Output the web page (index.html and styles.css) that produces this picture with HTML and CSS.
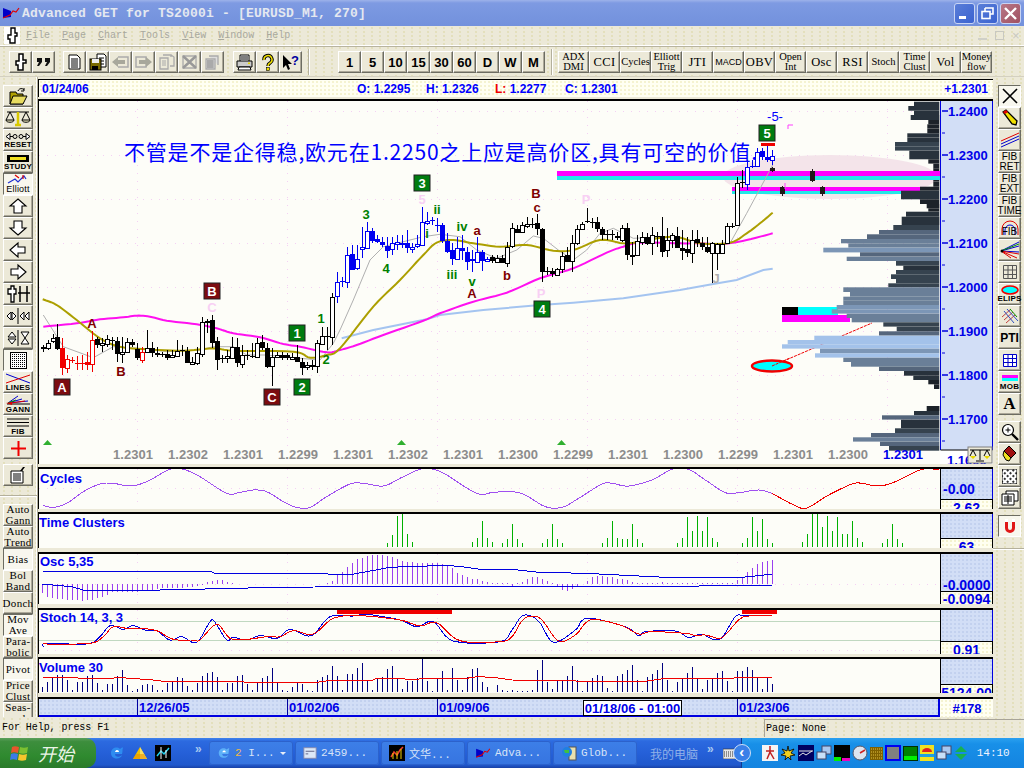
FILE: index.html
```html
<!DOCTYPE html>
<html lang="en">
<head>
<meta charset="utf-8">
<title>Advanced GET for TS2000i</title>
<link rel="stylesheet" href="styles.css">
</head>
<body>
<header class="titlebar">
  <svg class="app-icon" width="18" height="14" viewBox="0 0 18 14"><path d="M1 2l8 3v6l-8 1z" fill="#0000c8"/><path d="M1 12l7-3 3-4 3 1 3-4" fill="none" stroke="#e00000" stroke-width="1.2"/></svg>
  <span class="title-text">Advanced GET for TS2000i - [EURUSD_M1, 270]</span>
  <div class="win-btns">
    <span class="win-btn"><svg width="21" height="21" viewBox="0 0 21 21"><rect x="5" y="13" width="7" height="3" fill="#fff"/></svg></span>
    <span class="win-btn"><svg width="21" height="21" viewBox="0 0 21 21"><path d="M8 5h8v6h-3M8 5v3" fill="none" stroke="#fff" stroke-width="1.6"/><rect x="5" y="8.500" width="8" height="7" fill="none" stroke="#fff" stroke-width="1.6"/></svg></span>
    <span class="win-btn win-close"><svg width="21" height="21" viewBox="0 0 21 21"><path d="M5 5l11 11M16 5L5 16" stroke="#fff" stroke-width="2.400"/></svg></span>
  </div>
</header>

<nav class="menubar dots">
  <svg class="menu-logo" width="16" height="17" viewBox="0 0 16 17"><rect width="16" height="17" fill="#fff"/><path d="M7 1h4v5h2v3h-2v7H6v-4H4V8h3z" fill="#fff" stroke="#000" stroke-width="1.400"/></svg>
  <span class="menu-item"><u>F</u>ile</span>
  <span class="menu-item"><u>P</u>age</span>
  <span class="menu-item"><u>C</u>hart</span>
  <span class="menu-item"><u>T</u>ools</span>
  <span class="menu-item"><u>V</u>iew</span>
  <span class="menu-item"><u>W</u>indow</span>
  <span class="menu-item"><u>H</u>elp</span>
  <div class="mdi-btns"><i class="mdi-min"></i><i class="mdi-max"></i><i class="mdi-x">×</i></div>
</nav>

<div class="toolbar dots">
  <div class="tgroup g-a">
    <span class="btn"><svg width="19" height="18" viewBox="0 0 19 18"><path d="M8 1h4v6h3v3h-3v7H7v-5H5V8h3z" fill="#fff" stroke="#000" stroke-width="1.500"/></svg></span>
    <span class="btn"><svg width="19" height="18" viewBox="0 0 19 18"><path d="M3 5h5v4l-3 4H3l2-4H3zM11 5h5v4l-3 4h-2l2-4h-2z" fill="#111"/></svg></span>
  </div>
  <div class="tgroup g-b">
    <span class="btn"><svg width="19" height="18" viewBox="0 0 19 18"><path d="M4 2h8l3 3v11H4zM6 6h7M6 8h7M6 10h7M6 12h7M6 14h7" fill="#fff" stroke="#000"/></svg></span>
    <span class="btn"><svg width="19" height="18" viewBox="0 0 19 18"><path d="M9 1h7l2 2v11H9z" fill="#fff" stroke="#000"/><path d="M11 5h5M11 8h5M11 11h5" stroke="#000"/><rect x="2" y="6" width="11" height="11" fill="#7a6b00" stroke="#000"/><rect x="4" y="6" width="7" height="4" fill="#eee"/><rect x="4" y="13" width="6" height="4" fill="#000"/></svg></span>
    <span class="btn"><svg width="19" height="18" viewBox="0 0 19 18"><path d="M7 4h10v10H7" fill="none" stroke="#aaa" stroke-width="1.500"/><path d="M1 9l6-5v3h7v4H7v3z" fill="#a8a89c"/></svg></span>
    <span class="btn"><svg width="19" height="18" viewBox="0 0 19 18"><path d="M2 4h10v10H2z" fill="none" stroke="#aaa" stroke-width="1.500"/><path d="M18 9l-6-5v3H5v4h7v3z" fill="#a8a89c"/></svg></span>
    <span class="btn"><svg width="19" height="18" viewBox="0 0 19 18"><path d="M3 5h8v11H3zM6 2h8v2M9 5v0M14 2l3 2v9h-4" fill="none" stroke="#aaa" stroke-width="1.300"/><path d="M5 8h4M5 10h4M5 12h4" stroke="#aaa"/></svg></span>
    <span class="btn"><svg width="19" height="18" viewBox="0 0 19 18"><path d="M3 3h13v12H3z" fill="none" stroke="#aaa" stroke-width="1.300"/><path d="M3 3l13 12M16 3L3 15" stroke="#999" stroke-width="2.400"/></svg></span>
    <span class="btn"><svg width="19" height="18" viewBox="0 0 19 18"><path d="M3 6h9v10H3zM6 3h9v9" fill="#ddd" stroke="#aaa" stroke-width="1.300"/><path d="M4 8h7M4 10h7M4 12h7M4 14h7M5 7v8M7 7v8M9 7v8" stroke="#999"/></svg></span>
  </div>
  <div class="tgroup g-c">
    <span class="btn"><svg width="19" height="18" viewBox="0 0 19 18"><path d="M5 8V2h9v6" fill="#fff" stroke="#000"/><path d="M2 8h15v6H2z" fill="#ccc" stroke="#000"/><path d="M4 14l-1 3h13l-1-3z" fill="#fff" stroke="#000"/><path d="M6 4h7M6 6h7" stroke="#000"/><rect x="13" y="9.500" width="2" height="1.500" fill="#e8d800"/></svg></span>
    <span class="btn"><svg width="19" height="18" viewBox="0 0 19 18"><path d="M6 7a4 4 0 1 1 6 3c-2 1-2 2-2 3" fill="none" stroke="#000" stroke-width="3.400"/><path d="M6 7a4 4 0 1 1 6 3c-2 1-2 2-2 3" fill="none" stroke="#f0e000" stroke-width="1.500"/><rect x="8.500" y="14.500" width="3" height="3" fill="#f0e000" stroke="#000" stroke-width=".6"/></svg></span>
    <span class="btn"><svg width="19" height="18" viewBox="0 0 19 18"><path d="M2 2v13l3-3 2 5 2-1-2-5h4z" fill="#000"/><text x="10" y="12" class="qmark">?</text></svg></span>
  </div>
  <span class="tsep"></span>
  <div class="tgroup g-d">
    <span class="btn num">1</span><span class="btn num">5</span><span class="btn num">10</span><span class="btn num">15</span><span class="btn num">30</span><span class="btn num">60</span><span class="btn num">D</span><span class="btn num">W</span><span class="btn num">M</span>
  </div>
  <span class="tsep t2"></span>
  <div class="tgroup g-e">
    <span class="btn stud">ADX<br>DMI</span><span class="btn stud big">CCI</span><span class="btn stud">Cycles</span><span class="btn stud">Elliott<br>Trig</span><span class="btn stud big">JTI</span><span class="btn stud small">MACD</span><span class="btn stud big">OBV</span><span class="btn stud">Open<br>Int</span><span class="btn stud big">Osc</span><span class="btn stud big">RSI</span><span class="btn stud">Stoch</span><span class="btn stud">Time<br>Clust</span><span class="btn stud big">Vol</span><span class="btn stud">Money<br>flow</span>
  </div>
</div>

<main class="workspace">
  <aside class="tools tools-left dots">
    <span class="tool"><svg width="26" height="18" viewBox="0 0 26 18"><path d="M5 5h6l1 2h6v10H5z" fill="#b0a000" stroke="#000"/><path d="M5 17l3-8h14l-4 8z" fill="#e8dc60" stroke="#000"/><path d="M13 4c1-3 5-3 6-1M19 1v3h-3" fill="none" stroke="#000"/></svg></span>
    <span class="tool"><svg width="26" height="18" viewBox="0 0 26 18"><path d="M2 3h22M5 3l-4 8M5 3l4 8M21 3l-4 8M21 3l4 8" fill="none" stroke="#000"/><path d="M1 11h8c0 3-8 3-8 0zM17 11h8c0 3-8 3-8 0z" fill="#eeeac0" stroke="#000"/><path d="M13 3v12M10 16h6" stroke="#d8c800" stroke-width="2.500"/></svg></span>
    <span class="tool tool-txt"><svg width="26" height="9" viewBox="0 0 26 9"><path d="M1 4.500l4-3v6zM25 4.500l-4-3v6z" fill="#fff" stroke="#000"/><circle cx="10" cy="4.500" r="2" fill="none" stroke="#000"/><circle cx="16" cy="4.500" r="2" fill="none" stroke="#000"/><path d="M5 4.500h3M18 4.500h3" stroke="#000"/></svg><b>RESET</b></span>
    <span class="tool tool-txt"><svg width="24" height="9" viewBox="0 0 24 9"><rect x="1" y="1" width="22" height="7" fill="#000"/><rect x="4" y="3" width="16" height="3" fill="#f0e020"/></svg><b>STUDY</b></span>
    <span class="tool tool-txt on"><svg width="24" height="10" viewBox="0 0 24 10"><path d="M2 9l7-4 3 3 6-6 2 3" fill="none" stroke="#2030d0" stroke-width="1.200"/><path d="M9 1l4 3M17 1v4" stroke="#e00000" stroke-width="1.200"/></svg><b class="elliott">Elliott</b></span>
    <span class="tool"><svg width="20" height="18" viewBox="0 0 20 18"><path d="M10 2l8 7h-4v7H6V9H2z" fill="#fff" stroke="#000" stroke-width="1.100"/></svg></span>
    <span class="tool"><svg width="20" height="18" viewBox="0 0 20 18"><path d="M10 16l8-7h-4V2H6v7H2z" fill="#fff" stroke="#000" stroke-width="1.100"/></svg></span>
    <span class="tool"><svg width="20" height="18" viewBox="0 0 20 18"><path d="M2 9l8-7v4h7v6h-7v4z" fill="#fff" stroke="#000" stroke-width="1.100"/></svg></span>
    <span class="tool"><svg width="20" height="18" viewBox="0 0 20 18"><path d="M18 9l-8-7v4H3v6h7v4z" fill="#fff" stroke="#000" stroke-width="1.100"/></svg></span>
    <span class="tool"><svg width="26" height="18" viewBox="0 0 26 18"><path d="M3 4h3V1h3v3h2v5H9v8H6V9H3z" fill="#fff" stroke="#000" stroke-width="1.300"/><path d="M15 1v16M22 1v16M13 8h12" stroke="#000" stroke-width="1.500"/></svg></span>
    <span class="tool"><svg width="26" height="18" viewBox="0 0 26 18"><path d="M13 1v16" stroke="#000"/><path d="M2 9l4-4v8zM7 5l4 4-4 4zM15 9l4-4v8zM24 5l-4 4 4 4z" fill="#fff" stroke="#000"/></svg></span>
    <span class="tool"><svg width="26" height="18" viewBox="0 0 26 18"><path d="M13 1v16" stroke="#000"/><path d="M3 8l4-5 4 5zM3 10l4 5 4-5zM16 3h8l-4 6zM16 15h8l-4-6z" fill="#fff" stroke="#000"/></svg></span>
    <span class="tool on tool-gap"><svg width="17" height="17" viewBox="0 0 17 17"><rect x=".5" y=".5" width="16" height="16" fill="url(#gridfill)" stroke="#000"/><defs><pattern id="gridfill" width="2" height="2" patternUnits="userSpaceOnUse"><rect width="2" height="2" fill="#fff"/><rect width="1" height="1" fill="#000"/></pattern></defs></svg></span>
    <span class="tool tool-txt on2"><svg width="26" height="11" viewBox="0 0 26 11"><path d="M1 1l24 9" stroke="#0000d0"/><path d="M1 10l24-8" stroke="#e00000"/></svg><b>LINES</b></span>
    <span class="tool tool-txt"><svg width="26" height="11" viewBox="0 0 26 11"><path d="M3 8l10-7M3 8l14-4M3 8l20-2" stroke="#0000d0"/><path d="M3 8l8-3" stroke="#009000"/><path d="M2 9h23" stroke="#000"/><path d="M1 8l6-1v3z" fill="#e00000"/><path d="M6 8l14-2" stroke="#e00000"/></svg><b>GANN</b></span>
    <span class="tool tool-txt"><svg width="26" height="11" viewBox="0 0 26 11"><path d="M2 2h22M2 5.500h22M2 9h22" stroke="#000"/></svg><b>FIB</b></span>
    <span class="tool"><svg width="17" height="17" viewBox="0 0 17 17"><path d="M8.500 1v15M1 8.500h15" stroke="#f00000" stroke-width="2"/></svg></span>
    <span class="tool tool-apart"><svg width="20" height="18" viewBox="0 0 20 18"><path d="M3 5h12v12H3z" fill="#fff" stroke="#000"/><path d="M5 8h8M5 10h8M5 12h8M5 14h8" stroke="#000"/><path d="M12 5l3-4h2l-3 4z" fill="#000"/></svg></span>
    <hr class="tool-rule">
    <span class="tool ttl">Auto<br>Gann</span>
    <span class="tool ttl">Auto<br>Trend</span>
    <span class="tool ttl on">Bias</span>
    <span class="tool ttl">Bol<br>Band</span>
    <span class="tool ttl">Donch</span>
    <span class="tool ttl on">Mov<br>Ave</span>
    <span class="tool ttl">Para-<br>bolic</span>
    <span class="tool ttl on">Pivot</span>
    <span class="tool ttl">Price<br>Clust</span>
    <span class="tool ttl">Seas-<br>onals</span>
  </aside>

  <div class="panes">
    <div class="infobar">
      <span class="info-date">01/24/06</span>
      <span class="info-o">O: 1.2295</span>
      <span class="info-h">H: 1.2326</span>
      <span class="info-l">L: <i>1.2277</i></span>
      <span class="info-c">C: 1.2301</span>
      <span class="info-last">+1.2301</span>
    </div>

    <section class="pane pane-main">
      <svg class="plot" width="901" height="363" viewBox="39 101 901 363">
        <g id="grid-main" class="grid"></g>
        <ellipse cx="830" cy="177" rx="107" ry="22" fill="#f4e4ea"/>
        <path d="M772 366L872 323" stroke="#f00000" stroke-dasharray="3 1"/>
        <rect x="782" y="307" width="16" height="8" fill="#000"/>
        <rect x="798" y="307" width="40" height="8" fill="#00ffff"/>
        <rect x="782" y="315" width="68" height="7" fill="#ff00ff"/>
        <rect x="732" y="187" width="188" height="4" fill="#ff00ff"/>
        <rect x="732" y="191" width="180" height="3" fill="#22e8e8"/>
        <g id="hist"></g>
        <rect x="557" y="171" width="383" height="5" fill="#ff00ff"/>
        <rect x="557" y="176" width="383" height="4" fill="#22e8e8"/>
        <polyline id="l-grey" class="ln" stroke="#b0b0b0" stroke-width="1"/>
        <polyline id="l-lblue" class="ln" stroke="#a4c4f0" stroke-width="2"/>
        <polyline id="l-magenta" class="ln" stroke="#ff10f0" stroke-width="2"/>
        <polyline id="l-olive" class="ln" stroke="#ac9f00" stroke-width="2"/>
        <g id="candles"></g>
        <path d="M788 129v-4h5" fill="none" stroke="#ff40ff"/>
        <path d="M785 183v6" stroke="#ff40ff"/>
        <rect x="761" y="143" width="14" height="3" fill="#f00000"/>
        <ellipse cx="772" cy="366" rx="20" ry="5.500" fill="#00ffff" stroke="#f00000" stroke-width="2.500"/>
        <path d="M772 366l18-8" stroke="#f00000" stroke-dasharray="3 1"/>
        <text class="cn-note" x="124" y="160">不管是不是企得稳,欧元在1.2250之上应是高价区,具有可空的价值.</text>

        <rect class="box-r" x="54" y="379" width="16" height="16"/><text class="box-t" x="62" y="392">A</text>
        <rect class="box-r" x="204" y="283" width="16" height="16"/><text class="box-t" x="212" y="296">B</text>
        <rect class="box-r" x="264" y="389" width="16" height="16"/><text class="box-t" x="272" y="402">C</text>
        <rect class="box-g" x="289" y="325" width="16" height="16"/><text class="box-t" x="297" y="338">1</text>
        <rect class="box-g" x="294" y="379" width="16" height="16"/><text class="box-t" x="302" y="392">2</text>
        <rect class="box-g" x="414" y="175" width="16" height="16"/><text class="box-t" x="422" y="188">3</text>
        <rect class="box-g" x="534" y="301" width="16" height="16"/><text class="box-t" x="542" y="314">4</text>
        <rect class="box-g" x="759" y="125" width="16" height="16"/><text class="box-t" x="767" y="138">5</text>

        <text class="lb m" x="92" y="328">A</text><text class="lb m" x="121" y="376">B</text><text class="lb p" x="212" y="312">C</text>
        <text class="lb g" x="321" y="323">1</text><text class="lb g" x="326" y="364">2</text><text class="lb g" x="366" y="219">3</text>
        <text class="lb g" x="386" y="273">4</text><text class="lb p" x="422" y="204">5</text><text class="lb g" x="427" y="238">i</text>
        <text class="lb g" x="437" y="214">ii</text><text class="lb g" x="462" y="231">iv</text><text class="lb g" x="452" y="279">iii</text>
        <text class="lb g" x="472" y="286">v</text><text class="lb m" x="472" y="298">A</text><text class="lb m" x="477" y="235">a</text>
        <text class="lb m" x="507" y="280">b</text><text class="lb m" x="536" y="198">B</text><text class="lb m" x="537" y="212">c</text>
        <text class="lb p" x="541" y="298">P</text><text class="lb p" x="586" y="204">P</text><text class="lb y" x="716" y="283">J</text>
        <text class="lb b" x="775" y="121">-5-</text>

        <path d="M43 445h9l-4.500-5z" fill="#30b030"/><path d="M397 445h9l-4.500-5z" fill="#30b030"/><path d="M557 445h9l-4.500-5z" fill="#30b030"/>
        <g class="xlabels">
          <text x="133" y="459">1.2301</text><text x="188" y="459">1.2302</text><text x="243" y="459">1.2301</text><text x="298" y="459">1.2299</text>
          <text x="353" y="459">1.2301</text><text x="408" y="459">1.2302</text><text x="463" y="459">1.2301</text><text x="518" y="459">1.2300</text>
          <text x="573" y="459">1.2299</text><text x="628" y="459">1.2301</text><text x="683" y="459">1.2300</text><text x="738" y="459">1.2299</text>
          <text x="793" y="459">1.2301</text><text x="848" y="459">1.2300</text><text class="x-now" x="903" y="459">1.2301</text>
        </g>
      </svg>
      <svg class="scale-main" width="53" height="363" viewBox="940 101 53 363">
        <rect x="940" y="101" width="52" height="349" class="scale-fill"/>
        <path d="M940.500 101v349M992.500 101v349" stroke="#0000e0"/>
        <path d="M942 111h6M942 155h6M942 199h6M942 243h6M942 287h6M942 331h6M942 375h6M942 419h6" stroke="#0000e0" stroke-width="1.500"/>
        <path d="M942 133h3M942 177h3M942 221h3M942 265h3M942 309h3M942 353h3M942 397h3M942 441h3" stroke="#0000e0"/>
        <g class="ylabels">
          <text x="948" y="116">1.2400</text><text x="948" y="160">1.2300</text><text x="948" y="204">1.2200</text><text x="948" y="248">1.2100</text>
          <text x="948" y="292">1.2000</text><text x="948" y="336">1.1900</text><text x="948" y="380">1.1800</text><text x="948" y="424">1.1700</text>
        </g>
        <rect x="940" y="450" width="53" height="14" fill="#fff"/>
        <path d="M940.500 450h52" stroke="#000"/>
        <text class="ylabel-now" x="947" y="465">1.1600</text>
        <rect x="968" y="447" width="24" height="16" fill="#ece9d8" stroke="#808080"/>
        <path d="M970 450h20M973 450l-3 6M973 450l3 6M987 450l-3 6M987 450l3 6M980 450v10M976 461h8" fill="none" stroke="#000"/>
        <path d="M970 456h6l-3 3zM984 456h6l-3 3z" fill="#e8d800"/>
      </svg>
    </section>

    <section class="pane pane-cycles">
      <svg class="plot" width="901" height="40" viewBox="39 469 901 40">
        <g id="grid-cycles" class="grid"></g>
        <polyline id="l-cyc" class="ln crisp" stroke="#a050f0" stroke-width="1"/>
        <polyline id="l-cyc2" class="ln crisp" stroke="#f00000" stroke-width="1"/>
        <text class="pane-title" x="40" y="483">Cycles</text>
      </svg>
      <div class="scale"><div class="scale-up sv-cyc">-0.00</div><div class="scale-val sv-h10">2.62</div></div>
    </section>

    <section class="pane pane-clusters">
      <svg class="plot" width="901" height="34" viewBox="39 514 901 34">
        <g id="clusters"></g>
        <text class="pane-title" x="39" y="527">Time Clusters</text>
      </svg>
      <div class="scale"><div class="scale-up"></div><div class="scale-val sv-h10">63</div></div>
    </section>

    <section class="pane pane-osc">
      <svg class="plot" width="901" height="50" viewBox="39 554 901 50">
        <g id="grid-osc" class="grid"></g>
        <g id="osc"></g>
        <polyline id="l-osc1" class="ln crisp" stroke="#0000e0" stroke-width="1"/>
        <polyline id="l-osc2" class="ln crisp" stroke="#0000e0" stroke-width="1"/>
        <text class="pane-title" x="40" y="566">Osc 5,35</text>
      </svg>
      <div class="scale"><div class="scale-up sv-osc">-0.0000</div><div class="scale-val sv-h14">-0.0094</div></div>
    </section>

    <section class="pane pane-stoch">
      <svg class="plot" width="901" height="44" viewBox="39 610 901 44">
        <g id="grid-stoch" class="grid"></g>
        <path d="M39 621.500h901M39 640.500h901" stroke="#c0d8c0"/>
        <rect x="337" y="610" width="115" height="4" fill="#f00000"/>
        <rect x="742" y="610" width="35" height="4" fill="#f00000"/>
        <polyline id="l-st1" class="ln crisp" stroke="#0000e0" stroke-width="1"/>
        <polyline id="l-st2" class="ln crisp" stroke="#f00000" stroke-width="1"/>
        <text class="pane-title" x="40" y="622">Stoch 14, 3, 3</text>
      </svg>
      <div class="scale"><div class="scale-up"></div><div class="scale-val sv-h12">0.91</div></div>
    </section>

    <section class="pane pane-vol">
      <svg class="plot" width="901" height="34" viewBox="39 659 901 34">
        <g id="vol"></g>
        <polyline id="l-vol" class="ln crisp" stroke="#f00000" stroke-width="1"/>
        <text class="pane-title" x="39" y="672">Volume 30</text>
      </svg>
      <div class="scale"><div class="scale-up"></div><div class="scale-val sv-h8">5124.00</div></div>
    </section>

    <section class="pane pane-date">
      <div class="date-axis">
        <span class="date-tick d1">12/26/05</span>
        <span class="date-tick d2">01/02/06</span>
        <span class="date-tick d3">01/09/06</span>
        <span class="date-box">01/18/06 - 01:00</span>
        <span class="date-tick d4">01/23/06</span>
      </div>
      <div class="date-count">#178</div>
    </section>
  </div>

  <aside class="tools tools-right dots">
    <span class="tool on"><svg width="20" height="18" viewBox="0 0 20 18"><path d="M3 2l14 14M17 2L3 16" stroke="#000" stroke-width="1.600"/></svg></span>
    <span class="tool"><svg width="20" height="18" viewBox="0 0 20 18"><path d="M3 3l3-2 11 11-1 4-4-1z" fill="#f0e000" stroke="#000" stroke-width="1.300"/><path d="M3 3l3-2 2 2-3 2z" fill="#e00000"/></svg></span>
    <span class="tool"><svg width="20" height="18" viewBox="0 0 20 18"><path d="M1 10L19 2" stroke="#e00000"/><path d="M1 13L19 5M1 16L19 8" stroke="#0000d0"/></svg></span>
    <span class="tool ttr">FIB<br>RET</span>
    <span class="tool ttr">FIB<br>EXT</span>
    <span class="tool ttr">FIB<br>TIME</span>
    <span class="tool tool-over"><svg width="20" height="18" viewBox="0 0 20 18"><path d="M2 16v-6a8 8 0 0 1 16 0v6" fill="none" stroke="#e00000"/><path d="M5 16v-5a5 5 0 0 1 10 0v5" fill="none" stroke="#0000d0"/></svg><b>FIB</b></span>
    <span class="tool"><svg width="20" height="18" viewBox="0 0 20 18"><path d="M1 10L19 1M1 10L19 5M1 10l18 1" stroke="#0000d0"/><path d="M1 10l18-7" stroke="#009000"/><path d="M1 10l16 7M1 10l10 7M1 10l18 3" stroke="#e00000"/><circle cx="2" cy="10" r="1.500"/></svg></span>
    <span class="tool"><svg width="14" height="14" viewBox="0 0 14 14"><path d="M.5.500h13v13H.5zM.5 5h13M.5 9.500h13M5 .5v13M9.500.5v13" fill="#ece9d8" stroke="#555"/></svg></span>
    <span class="tool tool-txt"><svg width="18" height="10" viewBox="0 0 18 10"><ellipse cx="9" cy="5" rx="8" ry="4" fill="#00ffff" stroke="#f00000" stroke-width="1.600"/></svg><b>ELIPS</b></span>
    <span class="tool"><svg width="18" height="16" viewBox="0 0 18 16"><path d="M1 9L10 1M3 12l9-8M5 15l9-8" stroke="#c04040"/><path d="M6 1l11 12M3 3l10 12" stroke="#3050c0"/><path d="M9 1l7 8" stroke="#009000"/></svg></span>
    <span class="tool pti">PTI</span>
    <span class="tool"><svg width="16" height="15" viewBox="0 0 16 15"><path d="M1.500 1.500h13v12h-13zM1.500 5.500h13M1.500 9.500h13M6 1.500v12M10.500 1.500v12" fill="#fff" stroke="#0000c8"/></svg></span>
    <span class="tool tool-txt"><svg width="16" height="9" viewBox="0 0 16 9"><rect y="1" width="16" height="3" fill="#ff00ff"/><rect y="4" width="16" height="3" fill="#00ffff"/></svg><b>MOB</b></span>
    <span class="tool big-a">A</span>
    <span class="tool tool-apart2"><svg width="18" height="18" viewBox="0 0 18 18"><circle cx="7" cy="7" r="5.500" fill="#fff" stroke="#000" stroke-width="1.200"/><path d="M4.500 7h5M7 4.500v5" stroke="#000"/><path d="M11 11l6 6" stroke="#000" stroke-width="2.400"/></svg></span>
    <span class="tool"><svg width="18" height="18" viewBox="0 0 18 18"><path d="M3 6l5-5 7 7-5 5z" fill="#a01010" stroke="#000"/><path d="M3 6l7 7-2 3-3-1-3-5z" fill="#f0e020" stroke="#000"/></svg></span>
    <span class="tool"><svg width="15" height="15" viewBox="0 0 15 15"><rect width="15" height="15" fill="url(#checks)" stroke="#000"/><defs><pattern id="checks" width="4" height="4" patternUnits="userSpaceOnUse" patternTransform="rotate(45)"><rect width="4" height="4" fill="#fff"/><rect width="2" height="2" fill="#333"/></pattern></defs></svg></span>
    <span class="tool"><svg width="18" height="16" viewBox="0 0 18 16"><path d="M5 1h12v10H5z" fill="#fff" stroke="#000"/><path d="M1 4h12v11H1z" fill="#fff" stroke="#000"/><path d="M3 7h8M3 9h8M3 11h8M7 5v9" stroke="#000"/></svg></span>
    <span class="tool on tool-apart3"><svg width="16" height="17" viewBox="0 0 16 17"><path d="M3 1h3v9a2 2 0 0 0 4 0V1h3v9a5 5 0 0 1-10 0z" fill="#e01818"/><path d="M3 1h3v3H3zM10 1h3v3h-3z" fill="#fff"/></svg></span>
    <hr class="tool-rule r">
  </aside>
</main>

<footer class="statusbar dots">
  <span class="status-help">For Help, press F1</span>
  <span class="status-page">Page: None</span>
</footer>

<div class="taskbar">
  <div class="start">
    <svg width="20" height="18" viewBox="0 0 20 18"><path d="M2 3c2-1 4-1 7 0l-1 6c-3-1-5-1-7 0z" fill="#e8552c"/><path d="M10 3c3 1 5 1 8 0l-1 6c-3 1-5 1-8 0z" fill="#7cc031"/><path d="M1 10c2-1 4-1 7 0l-1 6c-3-1-5-1-7 0z" fill="#3c7ae8"/><path d="M9 10c3 1 5 1 8 0l-1 6c-3 1-5 1-8 0z" fill="#f6c62c"/></svg>
    <span class="start-text">开始</span>
  </div>
  <div class="quick">
    <svg width="16" height="16" viewBox="0 0 16 16"><path d="M13 9H6c0 3 4 4 7 1-1 5-11 5-11-2 0-5 6-7 9-4 1-1 3-2 3-1-1 2 0 3-1 6z" fill="#2e8cf0"/><path d="M6 7h4c0-2-3-3-4 0z" fill="#fff"/></svg>
    <svg width="16" height="16" viewBox="0 0 16 16"><path d="M8 2l7 12H1z" fill="#f0c000"/><path d="M8 2l7 12H8z" fill="#f8e060"/><path d="M1 14l3-5h8l3 5z" fill="#e89000" opacity=".6"/></svg>
    <svg width="16" height="16" viewBox="0 0 16 16"><rect width="16" height="16"/><path d="M2 11l4-5 3 3 5-6" fill="none" stroke="#20d0f0" stroke-width="1.500"/><path d="M6 2v12M11 5v8" stroke="#fff"/></svg>
    <span class="chev">»</span>
  </div>
  <div class="task t-active"><svg width="14" height="14" viewBox="0 0 16 16"><path d="M13 9H6c0 3 4 4 7 1-1 5-11 5-11-2 0-5 6-7 9-4 1-1 3-2 3-1-1 2 0 3-1 6z" fill="#5db0f8"/><path d="M6 7h4c0-2-3-3-4 0z" fill="#fff"/></svg><span><em>2</em> I...</span><i class="caret"></i></div>
  <div class="task"><svg width="14" height="14" viewBox="0 0 16 16"><rect x="1" y="2" width="14" height="12" fill="#dce8f8" stroke="#88a"/><path d="M3 6h10M3 9h3" stroke="#557"/></svg><span>2459...</span></div>
  <div class="task"><svg width="16" height="16" viewBox="0 0 16 16"><rect width="16" height="16"/><path d="M2 12l3-5 3 3 3-5 3-3" fill="none" stroke="#f04030" stroke-width="1.500"/><path d="M4 14V8M8 14V6M12 14V4" stroke="#f0d000"/></svg><span>文华...</span></div>
  <div class="task"><svg width="16" height="12" viewBox="0 0 18 14"><path d="M1 2l8 3v6l-8 1z" fill="#0000c8"/><path d="M1 12l7-3 3-4 3 1 3-4" fill="none" stroke="#e00000" stroke-width="1.200"/></svg><span>Adva...</span></div>
  <div class="task"><svg width="16" height="16" viewBox="0 0 16 16"><rect x="8" y="2" width="7" height="13" fill="#e8e0b0" stroke="#555"/><circle cx="6" cy="7" r="5" fill="#2080e0"/><path d="M3 5h5v3H4z" fill="#40c040"/></svg><span>Glob...</span></div>
  <span class="deskband">我的电脑</span>
  <span class="chev chev2">»</span>
  <svg class="kbd" width="14" height="12" viewBox="0 0 14 12"><rect y="2" width="14" height="10" fill="#e8e8e8" stroke="#333" stroke-width=".6"/><path d="M1 5h12M1 7h12M1 9h12" stroke="#333" stroke-dasharray="1 1"/></svg>
  <div class="tray">
    <span class="tray-back">‹</span>
    <svg width="16" height="16" viewBox="0 0 16 16"><rect width="16" height="16" fill="#f4f4f4"/><path d="M8 1v6l-3 7M8 7l4 7M4 6h8" stroke="#c02020" stroke-width="1.500" fill="none"/></svg>
    <svg width="16" height="16" viewBox="0 0 16 16"><path d="M8 1l1 5 5-2-3 4 4 2-5 1 1 4-3-3-3 3 1-4-5-1 4-2-3-4 5 2z" fill="#f0d020" stroke="#000" stroke-width=".8"/></svg>
    <svg width="16" height="16" viewBox="0 0 16 16"><rect width="16" height="16" fill="#000060"/><path d="M1 6h14M1 11l4-3 3 2 6-4" stroke="#e8e8e8" fill="none"/></svg>
    <svg width="16" height="16" viewBox="0 0 16 16"><rect x="6" y="1" width="9" height="8" fill="#a8c8f0" stroke="#446"/><rect x="1" y="7" width="9" height="7" fill="#c8e0f8" stroke="#446"/></svg>
    <svg width="16" height="16" viewBox="0 0 16 16"><rect width="16" height="16"/><rect y="12" width="7" height="4" fill="#00f000"/><rect x="8" y="13" width="8" height="3" fill="#f000c0"/></svg>
    <svg width="16" height="16" viewBox="0 0 16 16"><circle cx="8" cy="8" r="7" fill="#dce4f0" stroke="#556"/><path d="M8 8l5-3" stroke="#d02020" stroke-width="1.500"/></svg>
    <svg width="13" height="13" viewBox="0 0 13 13"><rect width="13" height="13" fill="#806000"/><path d="M1 2h11M1 5h11M1 8h11M1 11h11" stroke="#e0c040" stroke-dasharray="1 1"/></svg>
    <svg width="16" height="16" viewBox="0 0 16 16"><rect x="1" y="1" width="14" height="14" fill="#808080" stroke="#0000f0" stroke-width="2"/></svg>
    <svg width="15" height="15" viewBox="0 0 15 15"><rect width="15" height="15" fill="#003000"/><rect x="1" y="1" width="13" height="13" fill="#008000"/><rect x="1" y="10" width="13" height="4" fill="#00f000"/></svg>
    <svg width="14" height="16" viewBox="0 0 14 16"><rect width="14" height="16" fill="#f0e020"/><path d="M2 7a5 4 0 0 1 10 0z" fill="#e02020"/><rect y="9" width="14" height="3" fill="#20a0e0"/></svg>
    <svg width="16" height="16" viewBox="0 0 16 16"><rect x="6" y="1" width="9" height="8" fill="#a8c8f0" stroke="#446"/><rect x="1" y="7" width="9" height="7" fill="#c8e0f8" stroke="#446"/></svg>
    <svg width="14" height="16" viewBox="0 0 14 16"><path d="M7 1l6 6H1z" fill="#18b050"/><path d="M7 15l6-6H1z" fill="#18b050"/></svg>
    <span class="clock">14:10</span>
  </div>
</div>
<script src="chart.js"></script>
</body>
</html>
```

FILE: styles.css
```css
* { box-sizing: border-box; }
html, body { margin: 0; padding: 0; }
body {
  width: 1024px; height: 768px; overflow: hidden;
  display: flex; flex-direction: column;
  background: #ece9d8;
  font-family: "Liberation Sans", Arial, sans-serif;
}
.dots {
  background-color: #ece9d8;
  background-image: radial-gradient(circle, #d8d49c .6px, transparent .8px);
  background-size: 8px 4px;
}

/* title bar */
.titlebar {
  height: 26px; flex: none;
  display: flex; align-items: center;
  padding-left: 2px;
  background: linear-gradient(#9db2ea 0, #7e9ae2 3px, #7795df 60%, #7391dc 100%);
}
.app-icon { margin-right: 2px; }
.title-text {
  font: bold 13px "Liberation Mono", monospace;
  letter-spacing: .2px;
  color: #e4e8f0;
}
.win-btns { margin-left: auto; margin-right: 3px; display: flex; gap: 2px; }
.win-btn {
  width: 21px; height: 21px; display: block;
  border: 1px solid #c8d4f4; border-radius: 3px;
  background: linear-gradient(135deg, #5a7ed8, #3a62d0);
}
.win-btn svg { display: block; margin: -1px; }
.win-close { background: linear-gradient(135deg, #b87888, #a05060); }

/* menu */
.menubar {
  height: 20px; flex: none;
  display: flex; align-items: center;
  border-bottom: 1px solid #fff;
  box-shadow: 0 1px 0 #b8b4a0;
  position: relative;
}
.menu-logo { margin: 0 6px 0 4px; }
.menu-item {
  font: 10px "Liberation Mono", monospace;
  color: #a8a89e; margin-right: 12px;
}
.mdi-btns { margin-left: auto; margin-right: 3px; display: flex; gap: 8px; align-items: center; }
.mdi-btns i { width: 9px; height: 9px; display: block; color: #c8c8c0; font: normal 13px/9px "Liberation Sans", sans-serif; }
.mdi-min { border-bottom: 2px solid #d0d0c8; }
.mdi-max { border: 1px solid #c8c8c0; }

/* main toolbar */
.toolbar {
  height: 31px; flex: none;
  display: flex; align-items: center;
  border-bottom: 1px solid #d4d0c0;
  padding-left: 9px;
  padding-top: 2px;
}
.tgroup { display: flex; }
.g-a { gap: 0; width: 54px; }
.btn {
  flex: none; width: 23px; height: 22px;
  display: flex; align-items: center; justify-content: center;
  background: #ece9d8;
  border: 1px solid;
  border-color: #fff #6c6c62 #6c6c62 #fff;
  box-shadow: inset -1px -1px 0 #aca899;
  color: #000;
}
.g-c { margin-left: 9px; }
.tsep { width: 2px; height: 26px; margin: 0 0 0 6px; border-left: 1px solid #b4b09c; border-right: 1px solid #fff; }
.tsep.t2 { margin: 0 5px 0 6px; }
.g-d { margin-left: 28px; }
.g-e .btn { width: 31px; }
.num { font: bold 13px "Liberation Sans", sans-serif; }
.stud {
  font: 10.500px/10px "Liberation Serif", serif;
  text-align: center;
}
.stud.big { font-size: 12.500px; letter-spacing: .4px; }
.stud.small { font: 9px "Liberation Sans", sans-serif; }
.qmark { font: bold 13px "Liberation Sans", sans-serif; fill: #0000a0; }

/* workspace */
.workspace { flex: 1; display: flex; min-height: 0; }
.tools { flex: none; display: flex; flex-direction: column; }
.tools-left { width: 38px; padding: 8px 0 0 3px; border-right: 1px solid #b4b09c; box-shadow: inset -1px 0 0 #fff; overflow: hidden; }
.tools-right { width: 31px; padding: 8px 0 0 5px; overflow: hidden; }
.tool {
  flex: none; width: 30px; height: 22px;
  display: flex; flex-direction: column; align-items: center; justify-content: center;
  background: #ece9d8;
  border: 1px solid;
  border-color: #fff #6c6c62 #6c6c62 #fff;
  box-shadow: inset -1px -1px 0 #aca899;
}
.tools-right .tool { width: 23px; }
.tool.on { border-color: #6c6c62 #fff #fff #6c6c62; background: #f8f7ee; box-shadow: none; }
.tool.on2 { background: #f0eee0; }
.tool svg { flex: none; display: block; }
.tool-txt b { font: bold 8px/8px "Liberation Sans", sans-serif; letter-spacing: .2px; }
.tool-txt .elliott { font: 9px/10px "Liberation Sans", sans-serif; }
.ttl { font: 11px/11px "Liberation Serif", serif; text-align: center; letter-spacing: .3px; }
.ttr { font: 10px/10px "Liberation Sans", sans-serif; text-align: center; }
.tool-over { position: relative; }
.tool-over b { position: absolute; font: 10px "Liberation Sans", sans-serif; bottom: 1px; }
.pti { font: bold 12px "Liberation Sans", sans-serif; }
.big-a { font: bold 17px "Liberation Serif", serif; }
.tool-apart { margin-top: 5px; }
.tool-apart2 { margin-top: 6px; }
.tool-apart3 { margin-top: 6px; }
.tool-rule { border: 0; margin: 9px 0 7px -3px; height: 2px; width: 38px; flex: none; background: #fff; border-top: 1px solid #b4b09c; }
.tool-rule.r { margin: 11px 0 0 -5px; width: 31px; }

/* panes */
.panes { width: 955px; flex: none; display: flex; flex-direction: column; padding-top: 2px; }
.infobar {
  height: 18px; flex: none;
  display: flex; align-items: center;
  border-top: 1px solid #000; border-left: 1px solid #000;
  background-color: #fffff2;
  background-image: radial-gradient(circle, #e8e4a8 .6px, transparent .8px);
  background-size: 4px 4px;
  font: bold 12px "Liberation Sans", sans-serif;
  color: #0000ff;
  padding-left: 3px;
}
.infobar span { flex: none; }
.infobar i { font-style: normal; color: #0000ff; }
.info-date { width: 315px; }
.info-o { width: 69px; }
.info-h { width: 69px; }
.info-l { width: 70px; color: #f00000; }
.info-last { margin-left: auto; margin-right: 5px; }
.info-c { width: 60px; }
.pane { display: flex; flex: none; border-top: 2px solid #000; border-left: 1px solid #000; background: #fdfdf8; overflow: hidden; }
.pane-main { height: 365px; margin-top: 2px; }
.pane-cycles { height: 42px; margin-top: 3px; }
.pane-clusters { height: 36px; margin-top: 3px; }
.pane-osc { height: 52px; margin-top: 4px; }
.pane-stoch { height: 46px; margin-top: 4px; }
.pane-vol { height: 36px; margin-top: 3px; }
.pane-date { height: 20px; margin-top: 4px; background: transparent; }
.plot { flex: none; display: block; }
.ln { fill: none; }
.crisp { shape-rendering: crispEdges; }
.grid path { stroke: #f4d0f4; stroke-dasharray: 1 7; }
.scale-main { flex: none; display: block; }
.scale-fill { fill: #d2def6; }
.ylabels text, .ylabel-now, .xlabels text { font: bold 13px "Liberation Sans", sans-serif; }
.ylabels text, .ylabel-now { fill: #0000e8; }
.xlabels text { fill: #8c8c8c; text-anchor: middle; }
.xlabels .x-now { fill: #0000e8; }
.cn-note { font: 21px "Noto Sans CJK SC", "Liberation Sans", sans-serif; fill: #0000ff; letter-spacing: .8px; }
.box-r { fill: #7c0c10; stroke: #202020; }
.box-g { fill: #007c10; stroke: #202020; }
.box-t { font: bold 13px "Liberation Sans", sans-serif; fill: #fff; text-anchor: middle; }
.lb { font: bold 13px "Liberation Sans", sans-serif; text-anchor: middle; }
.lb.m { fill: #800000; }
.lb.g { fill: #008000; }
.lb.p { fill: #f8d0f4; }
.lb.y { fill: #b0b0b0; }
.lb.b { fill: #0000ff; font-weight: normal; }
.pane-title { font: bold 13px "Liberation Sans", sans-serif; fill: #0000f0; }

.scale { width: 53px; flex: none; display: flex; flex-direction: column; border-left: 1px solid #000; font: bold 14px "Liberation Sans", sans-serif; color: #0000e8; }
.scale-up {
  flex: 1; min-height: 0;
  background-color: #d2def6;
  background-image: radial-gradient(circle, #b0c2e6 .6px, transparent .8px);
  background-size: 4px 4px;
  border-right: 1px solid #0000e0;
  white-space: nowrap;
  display: flex; align-items: center;
}
.sv-cyc { padding-left: 2px; padding-top: 9px; }
.sv-osc { padding-left: 2px; padding-top: 24px; }
.scale-val {
  flex: none;
  background-color: #fffff0;
  background-image: radial-gradient(circle, #e8e4a8 .6px, transparent .8px);
  background-size: 4px 4px;
  border-top: 1px solid #000; border-right: 1px solid #000;
  text-align: center; line-height: 16px;
  overflow: hidden;
  white-space: nowrap;
}
.sv-h8 { height: 9px; }
.sv-h10 { height: 10px; }
.sv-h12 { height: 13px; }
.sv-h14 { height: 13px; line-height: 14px; }

.date-axis {
  width: 901px; flex: none; height: 18px;
  background-color: #d2def6;
  background-image: radial-gradient(circle, #b0c2e6 .6px, transparent .8px);
  background-size: 4px 4px;
  border-bottom: 2px solid #0000e0;
  border-right: 2px solid #0000e0;
  position: relative;
  font: bold 13px "Liberation Sans", sans-serif;
  color: #0000e8;
}
.date-tick { position: absolute; top: 0; height: 16px; border-left: 1px solid #0000a0; padding-left: 1px; line-height: 18px; }
.d1 { left: 98px; }
.d2 { left: 248px; }
.d3 { left: 398px; }
.d4 { left: 698px; }
.date-box { position: absolute; left: 544px; top: 1px; height: 16px; width: 99px; background: #fff; border: 1px solid #000; line-height: 15px; text-align: center; white-space: nowrap; }
.date-count { width: 54px; flex: none; height: 20px; background-color: #fffff2; background-image: radial-gradient(circle, #e8e4a8 .6px, transparent .8px); background-size: 4px 4px; font: bold 13px/20px "Liberation Sans", sans-serif; color: #0000e8; text-align: center; }

/* status */
.statusbar {
  height: 21px; flex: none; display: flex; align-items: center;
  font: 10px "Liberation Mono", monospace; color: #000;
  padding-left: 2px;
}
.status-help { width: 762px; flex: none; letter-spacing: -.05px; }
.status-page { flex: 1; height: 18px; line-height: 17px; padding-left: 1px; border-top: 1px solid #a8a498; border-left: 1px solid #a8a498; }

/* taskbar */
.taskbar {
  height: 30px; flex: none;
  display: flex; align-items: center;
  background: linear-gradient(#3f83ec 0, #2c6ae0 3px, #2560d8 50%, #2058cc 90%, #1941a5 100%);
  color: #d8e4f8;
  font: 11px "Liberation Mono", monospace;
  position: relative;
}
.start {
  width: 96px; height: 30px; flex: none;
  display: flex; align-items: center; padding-left: 10px; gap: 8px;
  border-radius: 0 10px 10px 0;
  background: linear-gradient(#5ca05c 0, #3d8e3d 12%, #2f8a2f 60%, #2a7a2a 100%);
}
.start-text { font: italic 18px "Noto Sans CJK SC", sans-serif; color: #eaf4e8; }
.quick { display: flex; align-items: center; gap: 7px; width: 113px; padding-left: 13px; flex: none; }
.chev { color: #a8c8f0; font: bold 12px "Liberation Sans", sans-serif; }
.quick .chev { margin-left: 17px; margin-top: -8px; }
.task {
  width: 84px; height: 24px; flex: none; margin-right: 2px;
  display: flex; align-items: center; gap: 4px; padding-left: 8px;
  border-radius: 3px;
  background: linear-gradient(#3d7fe8, #3674e0);
  box-shadow: inset 0 0 0 1px #2c62cc;
  font-family: "Liberation Mono", "Noto Sans CJK SC", monospace;
  color: #d8e4f8;
  white-space: nowrap;
}
.task em { font-style: normal; color: #f0b848; }
.t-active { position: relative; }
.caret { position: absolute; right: 7px; top: 11px; border: 3.500px solid transparent; border-top-color: #e8eef8; border-bottom: 0; }
.deskband { font: 12px "Noto Sans CJK SC", sans-serif; color: #90b0e8; margin-left: 11px; flex: none; }
.chev2 { margin-left: 9px; margin-top: -8px; flex: none; }
.kbd { margin-left: 9px; flex: none; }
.tray {
  flex: 1; height: 30px; margin-left: 4px;
  display: flex; align-items: center; gap: 2px;
  background: linear-gradient(#2aa0f0 0, #1890e8 20%, #1484e0 100%);
  border-left: 1px solid #103a90;
  padding-left: 0;
  position: relative;
}
.tray-back {
  width: 18px; height: 18px; flex: none; margin-left: -9px; margin-right: 9px;
  border-radius: 50%; background: #3a80e8; border: 1px solid #d0e0f8;
  color: #fff; font: bold 15px/14px "Liberation Sans", sans-serif; text-align: center;
}
.clock { margin-left: 7px; font: 11px "Liberation Mono", monospace; color: #f0f4ff; }
```

FILE: chart.js
```js
(function () {
  var Z3 = function (x, y) { return [x / 3, 80 + y / 3]; };
  var Z4 = function (x, y) { return [340 + x / 3, 100 + y / 3]; };
  var Z5 = function (x, y) { return [680 + x / 3, 80 + y / 3]; };
  var Z6 = function (x, y) { return [x / 3, 460 + y / 3]; };
  var Z7 = function (x, y) { return [512 + x / 3, 460 + y / 3]; };

  function $(id) { return document.getElementById(id); }
  function collect(parts) {
    var out = [];
    parts.forEach(function (p) { p[1].forEach(function (q) { out.push(p[0](q[0], q[1])); }); });
    return out;
  }
  function setLine(id, parts) {
    $(id).setAttribute("points", collect(parts).map(function (q) { return q[0].toFixed(1) + "," + q[1].toFixed(1); }).join(" "));
  }
  /* Catmull-Rom through the sampled points, for the oscillator curves */
  function setCurve(id, parts) {
    var a = collect(parts), out = [];
    for (var i = 0; i < a.length - 1; i++) {
      var p0 = a[Math.max(i - 1, 0)], p1 = a[i], p2 = a[i + 1], p3 = a[Math.min(i + 2, a.length - 1)];
      for (var k = 0; k < 6; k++) {
        var t = k / 6, t2 = t * t, t3 = t2 * t;
        var x = .5 * (2 * p1[0] + (p2[0] - p0[0]) * t + (2 * p0[0] - 5 * p1[0] + 4 * p2[0] - p3[0]) * t2 + (3 * p1[0] - p0[0] - 3 * p2[0] + p3[0]) * t3);
        var y = .5 * (2 * p1[1] + (p2[1] - p0[1]) * t + (2 * p0[1] - 5 * p1[1] + 4 * p2[1] - p3[1]) * t2 + (3 * p1[1] - p0[1] - 3 * p2[1] + p3[1]) * t3);
        out.push(x.toFixed(1) + "," + y.toFixed(1));
      }
    }
    var e = a[a.length - 1];
    out.push(e[0].toFixed(1) + "," + e[1].toFixed(1));
    $(id).setAttribute("points", out.join(" "));
  }

  /* price bars: [x, high, low, bodyTop, bodyBottom, kind, colour] */
  var R = "#f00000", B = "#0000f0", K = "#000000";
  var c3 = [
    [128,795,815,800,806,"b"],[143,780,810,790,805,"w"],[158,762,790,775,785,"w"],[172,733,810,770,805,"b"],
    [187,775,885,805,865,"b",R],[202,825,880,838,865,"w",R],[217,830,850,840,844,"b",R],[232,828,870,848,851,"b",R],
    [247,825,870,848,852,"b",R],[262,815,870,845,855,"b",R],[277,752,875,780,852,"w",R],[292,770,805,778,795,"b"],
    [307,775,815,790,797,"w"],[322,765,800,778,792,"w"],[337,770,810,781,784,"b"],[352,770,845,782,820,"b"],
    [367,772,850,815,822,"w"],[382,775,820,785,815,"w"],[397,778,800,786,794,"b"],[412,790,840,808,835,"b"],
    [427,800,850,815,838,"w",R],[442,750,820,803,815,"w"],[457,785,830,805,820,"b"],[472,800,830,820,825,"b"],
    [487,815,830,821,824,"b"],[502,810,840,822,835,"b"],[517,810,835,825,832,"w"],[532,780,830,812,828,"w"],
    [547,795,828,810,813,"b"],[562,800,850,813,848,"b"],[577,830,855,845,850,"w"],[592,800,855,820,850,"w"],
    [607,710,830,725,822,"w"],[622,718,760,722,724,"w"],[637,705,805,720,790,"b"],[652,770,870,782,838,"b"],
    [667,825,850,835,838,"b"],[682,810,850,828,835,"w"],[697,770,835,800,832,"w"],[712,775,860,802,850,"b"],
    [727,795,865,825,852,"w"],[742,810,840,826,829,"b"],[757,790,835,828,831,"b"],[772,775,835,790,832,"w"],
    [787,765,810,787,805,"b"],[802,790,865,805,862,"b"],[817,805,918,830,858,"w"],[832,815,835,826,832,"w"],
    [847,815,840,824,834,"b"],[862,820,840,826,836,"b"],[877,820,840,830,836,"w"],[892,795,845,830,844,"b"],
    [907,835,885,845,862,"b"],[922,845,870,855,860,"w"],[937,840,870,856,860,"w"],[952,780,880,790,858,"w"],
    [967,740,795,768,792,"w"],[982,740,810,768,771,"b"],[997,640,795,650,770,"w"],[1012,575,670,607,650,"w",B]
  ];
  var c4 = [
    [7,530,560,543,546,"b",B],[22,440,565,465,545,"w",B],[37,435,510,462,510,"b",B],[52,435,510,478,505,"w",B],
    [67,380,475,442,447,"w",B],[82,365,445,393,445,"w",B],[97,385,430,393,422,"b",B],[112,405,430,418,428,"b",B],
    [127,410,440,426,434,"b",B],[142,410,475,438,452,"b",B],[157,410,465,430,448,"w",B],[172,405,450,425,432,"w",B],
    [187,405,445,428,432,"w",B],[202,390,460,430,445,"b",B],[217,430,460,442,447,"w",B],[232,405,445,432,438,"w",B],
    [247,322,435,367,437,"w",B],[262,335,375,362,367,"w",B],[277,350,375,360,363,"b",B],[292,355,395,376,380,"b",B],
    [307,370,430,376,425,"b",B],[322,400,460,422,455,"b",B],[337,430,495,450,478,"b",B],[352,410,480,445,478,"w",B],
    [367,405,480,445,455,"b",B],[382,440,510,455,485,"b",B],[397,450,515,478,485,"b",B],[412,410,490,455,485,"w",B],
    [427,450,512,457,485,"b",B],[442,470,485,476,482,"w",B],[457,465,490,472,485,"b"],[472,465,490,473,485,"w"],
    [487,465,490,473,488,"b"],[502,425,500,440,488,"w"],[517,370,445,385,440,"w"],[532,375,400,386,398,"b"],
    [547,365,395,375,395,"w"],[562,350,385,373,380,"w"],[577,355,385,372,375,"b"],[592,342,405,370,388,"b"],
    [607,385,545,388,518,"b"],[622,500,525,514,517,"b"],[637,505,530,512,522,"b"],[652,505,525,507,525,"w"],
    [667,455,520,467,505,"w"],[682,440,485,465,485,"b"],[697,405,515,428,482,"w"],[712,375,435,388,430,"w"],
    [727,365,390,372,388,"w"],[742,325,370,363,366,"b"],[757,355,385,367,370,"b"],[772,350,395,367,388,"b"],
    [787,380,420,388,407,"b"],[802,390,420,401,404,"b"],[817,390,420,402,405,"b"],[832,395,420,408,413,"b"],
    [847,375,425,385,420,"w"],[862,370,480,385,465,"b"],[877,425,495,465,468,"w"],[892,405,465,422,463,"w"],
    [907,395,435,410,425,"w"],[922,400,435,410,432,"b"],[937,380,465,405,430,"w"],[952,395,440,408,412,"b"],
    [967,350,470,408,455,"b"],[982,385,470,420,450,"w"],[997,400,445,406,422,"w"],[1012,380,445,408,445,"b"]
  ];
  var c5 = [
    [7,450,540,505,515,"b"],[22,470,530,508,520,"b"],[37,450,550,480,520,"w"],[52,450,500,478,490,"b"],
    [67,470,510,488,500,"b"],[82,470,520,500,515,"b"],[97,485,610,490,520,"w"],[112,490,570,492,520,"w"],
    [127,480,520,492,520,"w"],[142,430,490,438,488,"w"],[157,428,445,438,442,"b"],[172,290,435,308,433,"w"],
    [187,270,325,306,310,"b"],[202,240,330,260,312,"w",B],[217,240,265,258,262,"b",B],[232,205,260,215,258,"w",B],
    [247,205,240,212,230,"b",B],[262,190,245,230,240,"b",B],[277,210,255,227,240,"w",B],
    [277,260,276,264,274,"b","#201818"],[307,318,348,322,344,"b","#201818"],[397,268,306,272,302,"b","#201818"],[427,318,348,322,344,"b","#201818"]
  ];
  function candleSvg(map, rows) {
    return rows.map(function (r) {
      var a = map(r[0], r[1]), b = map(r[0], r[2]), t = map(r[0], r[3]), u = map(r[0], r[4]);
      var x = Math.round(a[0]), col = r[6] || K, top = Math.round(t[1]), h = Math.max(1, Math.round(u[1] - t[1]));
      var s = '<path d="M' + (x + .5) + ' ' + Math.round(a[1]) + 'V' + Math.round(b[1]) + '" stroke="' + col + '"/>';
      if (r[5] === "w") {
        s += '<rect x="' + (x - 1.5) + '" y="' + (top + .5) + '" width="4" height="' + h + '" fill="#fff" stroke="' + col + '"/>';
      } else {
        s += '<rect x="' + (x - 2) + '" y="' + top + '" width="5" height="' + h + '" fill="' + col + '"/>';
      }
      return s;
    }).join("");
  }
  $("candles").innerHTML = candleSvg(Z3, c3) + candleSvg(Z4, c4) + candleSvg(Z5, c5);

  /* moving averages */
  setCurve("l-magenta", [[Z3, [[130,740],[230,730],[300,718],[370,712],[410,707],[450,710],[500,722],[590,733],[650,745],[700,760],[780,772],[850,792],[900,800],[980,817]]],
    [Z4, [[0,750],[50,735],[130,705],[250,662],[300,640],[400,605],[500,578],[600,535],[700,505],[800,458],[850,440],[900,428],[1020,430]]],
    [Z5, [[60,490],[130,492],[200,480],[278,460]]]]);
  setCurve("l-olive", [[Z3, [[128,658],[170,675],[230,720],[300,775],[360,800],[440,808],[550,812],[640,805],[700,812],[880,815],[930,833],[980,825]]],
    [Z4, [[0,745],[100,620],[180,540],[250,465],[290,428],[340,420],[400,430],[480,440],[560,435],[640,452],[700,450],[780,420],[850,430],[900,425],[1000,410]]],
    [Z5, [[60,490],[150,488],[200,460],[240,430],[278,398]]]]);
  setLine("l-lblue", [[Z4, [[5,715],[100,690],[260,658],[300,645],[430,630],[600,615],[700,608],[850,595],[1020,570]]],
    [Z5, [[100,612],[170,600],[250,570],[278,566]]]]);
  setLine("l-grey", [[Z3, [[130,705],[190,800],[280,833],[340,800],[420,805],[500,815],[600,810],[640,800],[700,800],[740,825],[800,825],[900,835],[960,840],[1000,790]]],
    [Z4, [[0,690],[40,600],[90,480],[130,440],[250,410],[300,403],[360,410],[410,450],[470,475],[530,450],[580,408],[610,415],[655,450],[700,480],[740,450],[780,400],[820,385],[880,415],[1000,410]]],
    [Z5, [[0,490],[150,490],[200,400],[278,255]]]]);

  /* volume profile */
  var rows = [[65,702],[78,685],[92,702],[105,692],[120,745],[133,742],[146,742],[160,682],[173,682],[186,645],[199,645],[212,688],[225,688],[238,745],[251,760],[265,760],[279,760],[292,760],[305,760],[320,720],[332,663],[345,663],[358,720],[372,740],[385,745],[395,678],[410,665],[423,665],[435,640],[450,597],[463,561],[477,483],[490,505],[503,430],[517,540],[530,500],[543,648],[557,670],[570,648],[583,633],[597,648],[610,625],[622,490],[636,510],[650,490],[661,490],[675,470],[688,455],[701,500],[714,515],[727,610],[740,650],[754,597],[767,403],[780,323],[793,306],[806,420],[820,405],[833,490],[846,513],[860,597],[873,672],[887,700],[900,745],[913,762],[978,740],[993,702],[1006,606],[1019,663],[1032,663],[1045,645],[1059,573],[1072,519],[1085,600],[1098,627]];
  function shade(w) {
    if (w < 60) return "#1c2229";
    if (w < 120) return "#28323c";
    if (w < 170) return "#36434f";
    if (w < 250) return "#55667c";
    if (w < 300) return "#6a7f98";
    if (w < 360) return "#7c96b6";
    return "#a3c2ea";
  }
  $("hist").innerHTML = rows.map(function (r, i) {
    var nextY = (rows[i + 1] && rows[i + 1][0] - r[0] < 20) ? rows[i + 1][0] : r[0] + 14;
    var a = Z5(r[1], r[0]), b = Z5(778, nextY);
    return '<rect x="' + a[0].toFixed(1) + '" y="' + a[1].toFixed(1) + '" width="' + (b[0] - a[0]).toFixed(1) + '" height="' + (b[1] - a[1]).toFixed(1) + '" fill="' + shade(778 - r[1]) + '"/>';
  }).join("");

  /* dotted grid */
  function grid(id, xs, ys, x0, x1, y0, y1) {
    var d = xs.map(function (x) { return "M" + (x + .5) + " " + y0 + "V" + y1; }).join("") +
            ys.map(function (y) { return "M" + x0 + " " + (y + .5) + "H" + x1; }).join("");
    $(id).innerHTML = '<path d="' + d + '"/>';
  }
  var vx = [137, 287, 437, 587, 737, 887];
  grid("grid-main", vx, [111, 155, 199, 243, 287, 331, 375, 419], 39, 940, 101, 450);
  grid("grid-cycles", [137, 287, 437, 587, 737], [488], 39, 940, 469, 509);
  grid("grid-osc", [137, 287, 437, 587, 737], [584], 39, 940, 554, 604);
  grid("grid-stoch", [137, 287, 437, 587, 737], [650], 39, 940, 610, 654);

  /* cycles */
  setCurve("l-cyc", [[Z6, [[130,137],[160,142],[200,130],[250,95],[300,72],[340,70],[390,78],[440,65],[510,28],[550,28],[600,50],[680,100],[720,97],[760,90],[800,95],[850,125],[890,142],[930,142],[980,110],[1050,72],[1090,70],[1150,78],[1200,55],[1260,28],[1300,28],[1340,45],[1430,100],[1480,97]]],
    [Z7, [[0,95],[40,105],[100,140],[150,142],[200,115],[270,72],[300,70],[350,78],[420,60],[480,28],[530,28],[580,60],[640,98],[680,98],[740,90],[780,100]]]]);
  setCurve("l-cyc2", [[Z7, [[780,100],[860,142],[890,142],[950,105],[1020,72],[1050,70],[1100,78],[1150,65],[1230,28],[1280,30]]]]);

  /* stems */
  function stems(map, list, base, col) {
    var d = list.map(function (p) {
      var a = map(p[0], p[1]), b = map(p[0], base);
      return "M" + (Math.round(a[0]) + .5) + " " + Math.round(a[1]) + "V" + Math.round(b[1]);
    }).join("");
    return '<path d="' + d + '" stroke="' + col + '"/>';
  }
  function pairs(s) {
    var n = s.split(/[ ,]+/), out = [];
    for (var i = 0; i < n.length; i += 2) { out.push([+n[i], +n[i + 1]]); }
    return out;
  }
  var G = "#00b000";
  $("clusters").innerHTML = stems(Z6, pairs("1162,250 1177,225 1192,168 1207,162 1222,222 1237,247 1417,247 1432,235 1447,183 1462,235 1477,247 1507,250 1522,238"), 262, G) +
    stems(Z7, pairs("0,192 15,237 30,250 90,250 105,237 120,192 135,237 150,250 270,250 285,235 300,182 315,235 330,238 345,238 360,192 375,237 390,250 495,250 510,235 525,170 540,213 555,168 570,213 585,170 600,235 615,247 690,250 705,235 720,170 735,213 750,178 765,237 780,250 870,247 885,222 900,162 915,162 930,200 945,168 960,213 975,170 990,222 1005,222 1020,183 1035,235 1050,247 1110,250 1125,237 1140,192 1155,237 1170,250"), 262, G);

  var P = "#9a40f0";
  $("osc").innerHTML = stems(Z6, pairs("127,400 142,410 157,415 172,417 187,417 202,420 217,420 232,420 247,423 262,420 277,420 292,415 307,410 322,405 337,395 352,395 367,395 382,395 397,395 412,395 427,393 442,393 457,390 472,388 487,385 502,385 517,385 532,383 547,383 562,380 577,380 592,378 607,375 622,367 637,363 652,360 667,360 682,365 697,370 712,371 727,371 742,371 757,371 772,371 787,371 802,371 817,371 832,371 847,371 862,371 877,371 892,371 907,371 922,371 937,371 952,371 980,368 995,362 1012,345 1027,335 1042,322 1057,310 1072,298 1087,294 1102,287 1117,286 1132,286 1147,286 1162,288 1177,292 1192,298 1207,302 1222,305 1237,307 1252,310 1267,310 1282,310 1297,310 1312,308 1327,312 1342,318 1357,325 1372,338 1387,345 1402,352 1417,357 1432,358 1447,362 1462,367 1477,370 1492,370 1507,368 1522,368"), 372, P) +
    stems(Z7, pairs("0,378 15,370 30,365 45,358 60,352 75,352 90,358 105,362 120,368 135,380 150,390 165,392 180,386 195,378 210,372 225,362 240,352 255,347 270,347 285,350 300,352 315,357 330,358 345,360 360,367 375,368 390,370 405,370 420,368 435,370 450,366 465,368 480,368 495,368 510,370 525,370 540,368 555,368 570,370 585,370 600,370 615,370 630,370 645,370 660,368 675,360 690,350 705,336 720,325 735,312 750,307 765,302 780,300"), 372, P);
  setLine("l-osc1", [[Z6, [[130,334],[630,334],[645,340],[970,340],[1000,344],[1050,344],[1100,335],[1170,322],[1340,316],[1400,322],[1440,328]]],
    [Z7, [[0,328],[80,337],[220,340],[380,348],[460,352],[690,352],[730,348],[780,342]]]]);
  setLine("l-osc2", [[Z6, [[125,372],[215,380],[250,390],[480,390],[570,388],[720,385],[800,382],[945,381],[950,378]]],
    [Z7, [[0,378],[560,378],[570,376],[780,376]]]]);

  setCurve("l-st1", [[Z6, [[130,560],[140,550],[260,552],[300,530],[330,497],[370,508],[400,497],[440,512],[470,512],[510,540],[545,530],[590,547],[630,485],[645,487],[680,540],[700,532],[740,540],[780,527],[830,535],[860,512],[880,510],[935,527],[990,470],[1060,468],[1100,463],[1200,480],[1250,500],[1300,485],[1360,543],[1500,545]]],
    [Z7, [[0,510],[30,468],[60,470],[85,490],[125,547],[190,510],[210,482],[240,475],[340,500],[380,527],[400,515],[490,513],[530,532],[570,522],[600,537],[630,533],[670,470],[700,467],[780,468]]]]);
  setCurve("l-st2", [[Z6, [[130,550],[150,552],[270,550],[310,530],[340,500],[380,505],[420,505],[470,512],[520,538],[580,540],[600,540],[650,493],[690,535],[740,538],[800,530],[840,530],[880,512],[940,522],[1000,475],[1080,467],[1200,480],[1260,498],[1310,488],[1380,542],[1500,545]]],
    [Z7, [[0,530],[30,482],[60,468],[90,480],[140,543],[190,525],[220,490],[250,478],[330,497],[380,522],[420,515],[520,520],[550,527],[580,525],[620,535],[640,525],[680,480],[710,468],[780,467]]]]);

  var N = "#000080";
  $("vol").innerHTML = stems(Z6, pairs("127,680 142,667 157,650 172,645 187,645 202,660 217,690 232,665 247,665 262,648 277,645 292,670 307,690 322,672 337,672 352,648 367,630 382,675 397,692 412,688 427,675 442,672 457,675 472,690 487,690 502,668 517,665 532,650 547,655 562,678 577,690 592,668 607,647 622,638 637,635 652,650 667,690 682,668 697,668 712,648 727,645 742,672 757,690 772,668 787,655 802,648 817,623 832,668 847,690 862,692 877,682 892,665 907,672 922,690 937,692 952,660 967,650 982,645 997,618 1012,648 1027,690 1042,643 1057,642 1072,625 1087,610 1102,660 1117,690 1132,655 1147,652 1162,628 1177,618 1192,655 1207,688 1222,662 1237,662 1252,655 1267,597 1282,662 1297,692 1312,655 1327,632 1342,690 1357,625 1372,660 1387,690 1402,652 1417,628 1432,625 1447,665 1462,680 1477,695 1492,675 1507,690 1522,692"), 696, N) +
    stems(Z7, pairs("0,690 15,692 30,692 45,692 60,690 75,630 90,600 105,665 120,687 135,662 150,662 165,648 180,618 195,660 210,692 225,662 240,655 255,646 270,648 285,685 300,692 315,648 330,642 345,630 360,615 375,660 390,692 405,652 420,642 435,630 450,610 465,660 480,692 495,665 510,655 525,640 540,622 555,655 570,688 585,660 600,655 615,638 630,633 645,662 660,692 675,634 690,634 705,622 720,630 735,650 750,686 765,650 780,672"), 696, N);
  setLine("l-vol", [[Z6, [[130,652],[220,652],[240,655],[340,655],[350,652],[460,660],[500,665],[950,667],[1000,660],[1120,660],[1130,655],[1250,658],[1270,655],[1400,655],[1430,650],[1480,652]]],
    [Z7, [[0,660],[150,662],[230,664],[400,664],[460,655],[660,655],[680,652],[780,652]]]]);
})();
```
